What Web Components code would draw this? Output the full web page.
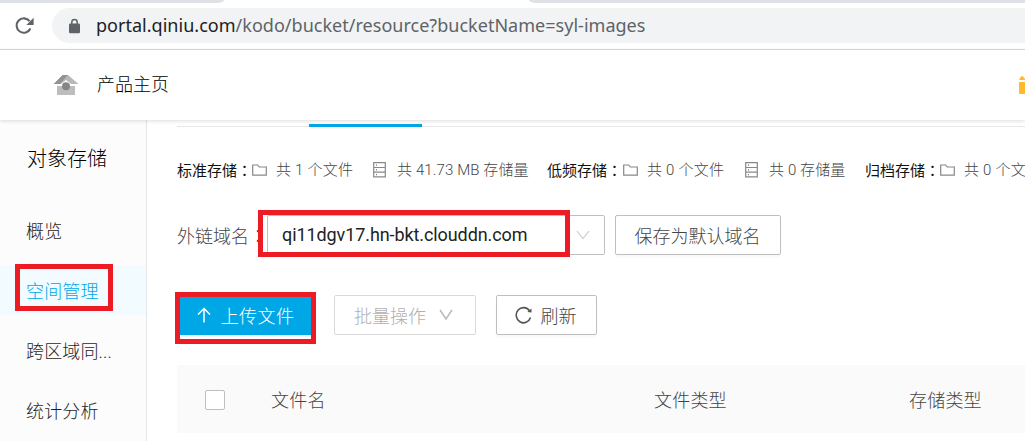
<!DOCTYPE html>
<html lang="zh-CN">
<head>
<meta charset="utf-8">
<title>对象存储</title>
<style>
html,body{margin:0;padding:0;background:#fff}
body{width:1025px;height:441px;overflow:hidden;font-family:Roboto,"Noto Sans CJK SC",sans-serif;font-weight:300;font-size:18px}
</style>
</head>
<body>
<kodo-page></kodo-page>
<script>
function define(name, html){
  const t=document.createElement('template');
  t.innerHTML='<style>*{box-sizing:border-box}svg{display:block;flex:none}.colon{font-family:"Noto Sans CJK TC",sans-serif}</style>'+html;
  customElements.define(name,class extends HTMLElement{
    constructor(){super();this.attachShadow({mode:'open'}).append(t.content.cloneNode(true));}
  });
}

define('mark-box',`<style>
:host{position:absolute;border:5px solid #ed1c24;pointer-events:none;box-sizing:border-box;z-index:5}
</style>`);

define('browser-bar',`<style>
:host{display:flex;flex-direction:column;height:50px;background:#fff;border-bottom:1px solid #d8dadc;box-sizing:border-box}
.tabs{display:flex;height:3px;background:#fff;flex:none}
.tabs i{background:#dee1e6;height:3px}
.a{width:224px;border-bottom-right-radius:7px 3px}
.gap{width:305px}
.b{flex:1;border-bottom-left-radius:7px 3px}
.row{display:flex;align-items:center;margin-top:5px;padding-left:15px}
.omni{display:flex;align-items:center;margin-left:17px;flex:1;height:35px;background:#f1f3f4;border-radius:18px 0 0 18px;padding-left:17px}
.url{margin-left:16px;font:400 18px/35px "Noto Sans",sans-serif;color:#5f6368;white-space:pre;letter-spacing:.02px}
b{font-weight:400;color:#202124}
</style>
<div class="tabs"><i class="a"></i><span class="gap"></span><i class="b"></i></div>
<div class="row">
<svg width="20" height="20" viewBox="0 0 20 20"><path d="M15.4 12.5A7.2 7.2 0 1 1 14.6 5.2" fill="none" stroke="#5f6368" stroke-width="2.1"/><path d="M18.6 1.8v7.2h-7.2z" fill="#5f6368"/></svg>
<div class="omni"><svg width="11" height="16" viewBox="0 0 11 16"><path d="M2.8 7V4.2a2.7 2.7 0 0 1 5.4 0V7" fill="none" stroke="#5f6368" stroke-width="1.5"/><rect y="5.6" width="11" height="9.6" rx="1.2" fill="#5f6368"/></svg>
<span class="url"><b>portal.qiniu.com</b>/kodo/bucket/resource?bucketName=syl-images</span></div></div>`);

define('product-header',`<style>
:host{display:flex;align-items:center;height:70px;padding-left:53px;background:#fff;color:#000;box-shadow:0 1px 4px rgba(0,0,0,.14);position:relative;z-index:2;box-sizing:border-box;line-height:26px}
span{margin-left:18px}
.gift{margin-left:auto}
</style>
<svg width="26" height="22" viewBox="0 0 26 22"><path d="M4 12h18v9H4z" fill="#bdbdbd"/><path d="M10 1h5l10.500 9h-7.500l-5-4-5 4H.8z" fill="#b8b8b8"/><path d="M9.600 1H15L6.800 9.900H.8z" fill="#929292"/><circle cx="13" cy="12.300" r="4" fill="#858585"/></svg>
<span><slot></slot></span>
<svg class="gift" width="6" height="19" viewBox="0 0 6 19"><path d="M0 4q2-4 3-4t3 3v1zM0 6h6v12H1q-1 0-1-1z" fill="#ffb92b"/></svg>`);

define('nav-item',`<style>
:host{display:flex;align-items:center;height:50px;padding:0 0 1px 26px;color:#1f1f1f;position:relative;box-sizing:border-box;margin-bottom:10px;white-space:nowrap;letter-spacing:.15px}
:host([active]){background:#f2fbff;color:#00a7e7}
</style><span><slot></slot></span>`);

define('side-nav',`<style>
:host{display:block;width:147px;background:#fcfcfc;border-right:1px solid #e3e5e7;box-sizing:border-box}
h1{margin:0 0 47px;padding:23px 0 0 27px;font-weight:300;font-size:20px;line-height:32px;color:#000}
nav{margin-top:-17px}
</style>
<h1>对象存储</h1><nav>
<nav-item>概览</nav-item><nav-item active>空间管理<mark-box style="left:15px;top:-1px;width:98px;height:47px"></mark-box></nav-item><nav-item>跨区域同...</nav-item><nav-item>统计分析</nav-item></nav>`);

define('file-stat',`<style>
:host{display:flex;align-items:center;color:#444}
span{margin-left:9px;white-space:nowrap;letter-spacing:.22px}
</style>
<svg width="15" height="12" viewBox="0 0 15 12"><path d="M.7 1h5l1.6 2h7v8.2H.7z" fill="none" stroke="#888" stroke-width="1.2"/></svg><span><slot></slot></span>`);

define('size-stat',`<style>
:host{display:flex;align-items:center;color:#444}
span{margin-left:11px;white-space:nowrap;letter-spacing:.12px}
</style>
<svg width="13" height="16" viewBox="0 0 13 16"><path d="M.7.7h11.6v14.2H.7zM.7 5.5h11.6M.7 10.2h11.6" fill="none" stroke="#888" stroke-width="1.2"/><path d="M3 3.1h1M3 7.9h1M3 12.6h1" stroke="#777" stroke-width="1.2"/></svg><span><slot></slot></span>`);

define('storage-stats',`<style>
:host{display:flex;align-items:center;height:24px;font-size:15px;line-height:24px;overflow:hidden}
b{font-weight:400;color:#111;white-space:nowrap;flex:none;width:75px}
file-stat,size-stat{flex:none}
</style>
<b>标准存储<span class="colon" lang="zh-TW">：</span></b><file-stat style="width:121px">共 1 个文件</file-stat><size-stat style="width:174px">共 41.73 MB 存储量</size-stat>
<b style="width:76px">低频存储<span class="colon" lang="zh-TW">：</span></b><file-stat style="width:122px">共 0 个文件</file-stat><size-stat style="width:120px">共 0 存储量</size-stat>
<b>归档存储<span class="colon" lang="zh-TW">：</span></b><file-stat>共 0 个文件</file-stat>`);

define('kodo-button',`<style>
:host{display:flex;align-items:center;justify-content:center;height:40px;border:1px solid #bfbfbf;border-radius:2px;background:#fff;color:#444;box-shadow:0 2px 2px rgba(0,0,0,.03);box-sizing:border-box;gap:9px;position:relative;white-space:nowrap;flex:none}
:host([primary]){background:#00a7e7;border-color:#00a7e7;color:#fff;box-shadow:0 2px 2px rgba(0,0,0,.06)}
:host([disabled]){border-color:#d9d9d9;color:#b0b0b0;box-shadow:none}
</style><slot></slot>`);

define('domain-select',`<style>
:host{display:flex;align-items:center;width:338px;height:40px;border:1px solid #bfbfbf;border-radius:2px;padding:0 14px;justify-content:space-between;position:relative;box-sizing:border-box;color:#222;font-weight:400;font-size:18px;flex:none}
span{letter-spacing:-.09px;padding-bottom:2px}
</style><span><slot></slot></span><svg width="14" height="10" viewBox="0 0 14 10"><path d="M1 1l6 7.5L13 1" fill="none" stroke="#ccc" stroke-width="1.2"/></svg>
<mark-box style="left:-10px;top:-6px;width:312px;height:47px"></mark-box>`);

define('file-table-head',`<style>
:host{display:grid;grid-template-columns:66px 383px 255px 1fr;align-items:center;height:68px;padding-left:28px;background:#fafafa;color:#444;box-sizing:border-box;letter-spacing:.2px}
i{width:20px;height:20px;border:1px solid #bfbfbf;border-radius:2px;background:#fff;margin-top:1px}
</style><i></i><span>文件名</span><span>文件类型</span><span>存储类型</span>`);

define('kodo-page',`<style>
:host{display:block}
.body{display:grid;grid-template-columns:147px 1fr;height:321px}
main{padding-left:30px;min-width:0}
.tabs{height:7px;border-bottom:1px solid #e6e6e6;display:flex;align-items:flex-end}
.tabs i{width:113px;height:3px;margin:0 0 -1px 132.4px;background:#00a7e7}
storage-stats{margin-top:31px}
.row{display:flex;align-items:center}
.domain{margin-top:33px}
.domain label{width:90px;color:#444;white-space:nowrap}
.domain kodo-button{width:166px;margin-left:10px;padding-right:1px}
.acts{margin-top:40px;gap:20px}
file-table-head{margin-top:30px}
</style>
<browser-bar></browser-bar><product-header>产品主页</product-header>
<div class="body"><side-nav></side-nav><main>
<div class="tabs"><i></i></div>
<storage-stats></storage-stats>
<div class="row domain"><label>外链域名<span class="colon" lang="zh-TW">：</span></label><domain-select>qi11dgv17.hn-bkt.clouddn.com</domain-select><kodo-button>保存为默认域名</kodo-button></div>
<div class="row acts">
<kodo-button primary style="width:137px;gap:10px"><svg width="14" height="16" viewBox="0 0 14 16"><path d="M7 15.500V1.500M1 7.500L7 1.500l6 6" fill="none" stroke="#fff" stroke-width="1.5"/></svg><span style="letter-spacing:.4px">上传文件</span><mark-box style="left:-3px;top:-4px;width:141px;height:52px"></mark-box></kodo-button>
<kodo-button disabled style="width:142px;gap:13px;padding-right:3px"><span>批量操作</span><svg width="14" height="12" viewBox="0 0 14 12"><path d="M1 1l6 9 6-9" fill="none" stroke="#b8b8b8" stroke-width="1.5"/></svg></kodo-button>
<kodo-button style="width:101px;padding-right:2px"><svg width="17" height="18" viewBox="0 0 17 18"><path d="M15.500 11.500A7.300 7.600 0 1 1 14.500 4.800" fill="none" stroke="#555" stroke-width="1.6"/><path d="M16.500 2.400v4.200l-4.200-.7z" fill="#555"/></svg><span>刷新</span></kodo-button>
</div>
<file-table-head></file-table-head>
</main></div>`);
</script>
</body>
</html>
